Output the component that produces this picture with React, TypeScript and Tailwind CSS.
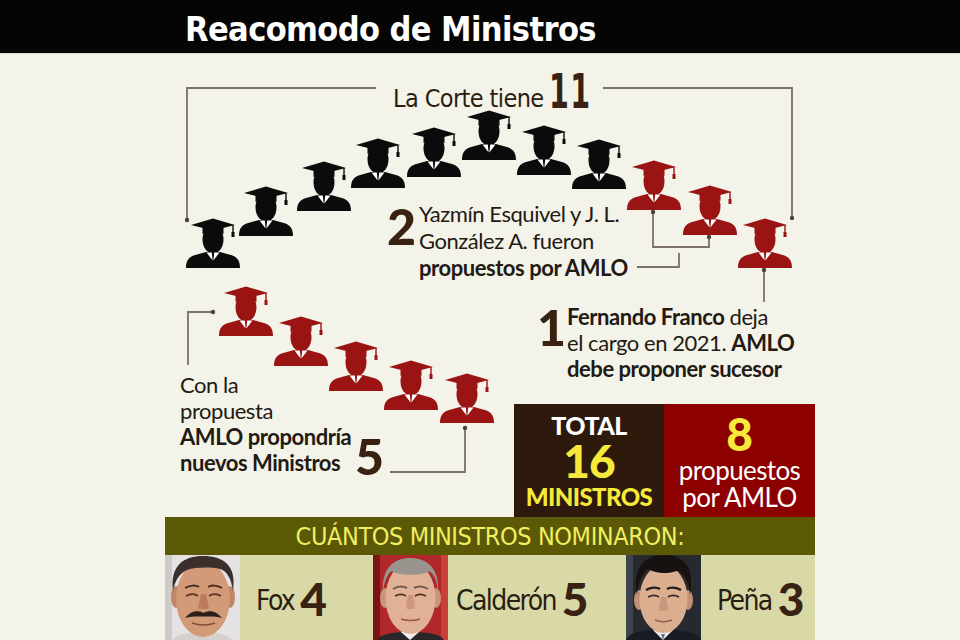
import React from "react";

type Node = { x: number; y: number; red?: boolean };

// coordinates are measured on the page; the canvas starts under the 54px header
const TOP = 54;

const nodes: Node[] = [
  { x: 185, y: 215 },
  { x: 238, y: 183 },
  { x: 296, y: 158 },
  { x: 350, y: 135 },
  { x: 406, y: 124 },
  { x: 461, y: 107 },
  { x: 516, y: 122 },
  { x: 571, y: 136 },
  { x: 626, y: 157, red: true },
  { x: 682, y: 182, red: true },
  { x: 737, y: 215, red: true },
  { x: 218, y: 283, red: true },
  { x: 273, y: 313, red: true },
  { x: 328, y: 338, red: true },
  { x: 383, y: 357, red: true },
  { x: 439, y: 370, red: true },
];

function Graduate({ color }: { color: string }) {
  return (
    <svg viewBox="0 0 56 53" width="56" height="53">
      <path
        fill={color}
        d="M1 53 C1 45 4 41.5 12 39.5 L21 37 L35 37 L44 39.5 C52 41.5 55 45 55 53 Z"
      />
      <ellipse cx="28" cy="24.5" rx="10.5" ry="14" fill={color} />
      <path fill={color} d="M17.5 10 H38.5 V19 C34 17 22 17 17.5 19 Z" />
      <path fill={color} d="M6 10 L28 3.5 L50 10 L28 15.5 Z" />
      <path stroke={color} strokeWidth="1.4" fill="none" d="M48 10 V18" />
      <rect x="46.5" y="17" width="3" height="5" fill={color} />
      <path fill="#fff" d="M21.5 37.5 L26.8 37.5 L27.6 45.5 Z M34.5 37.5 L29.2 37.5 L28.4 45.5 Z" />
    </svg>
  );
}

function Connectors() {
  const dots = [
    [187, 220],
    [792, 218],
    [653, 212],
    [709, 237],
    [764, 270],
    [213, 312],
    [465, 428],
  ];
  return (
    <svg
      className="absolute left-0 top-0"
      width="960"
      height="463"
      viewBox={`0 ${TOP} 960 463`}
      fill="none"
      stroke="#7a7264"
      strokeWidth="1.8"
    >
      <path d="M376 88 H187 V220" />
      <path d="M603 88 H792 V218" />
      <path d="M637 267 H679 V253" />
      <path d="M653 212 V247 H709 V237" />
      <path d="M764 270 V302" />
      <path d="M213 312 H188 V365" />
      <path d="M390 472 H465 V428" />
      {dots.map(([cx, cy]) => (
        <circle key={`${cx}-${cy}`} cx={cx} cy={cy} r="2.2" fill="#4a4238" stroke="none" />
      ))}
    </svg>
  );
}

function FoxPhoto() {
  return (
    <svg viewBox="0 0 75 85" width="75" height="85" className="block">
      <rect width="75" height="85" fill="#e4e2e2" />
      <rect x="0" y="0" width="7" height="85" fill="#cfcbc9" />
      <path d="M8 85 C10 80 22 77 37 77 C52 77 64 80 68 85 Z" fill="#d6d0cc" />
      <ellipse cx="11" cy="42" rx="5" ry="11" fill="#c08466" />
      <ellipse cx="65" cy="42" rx="5" ry="11" fill="#c08466" />
      <ellipse cx="38" cy="44" rx="27" ry="38" fill="#d29a76" />
      <path d="M8 36 C5 10 19 1 38 1 C58 1 72 10 68 36 C66 23 62 16 55 14 C46 12 31 12 22 15 C15 18 10 25 8 36 Z" fill="#3a2f2a" />
      <path d="M20 33 C25 30 31 30 34 32 M43 32 C46 30 52 30 57 33" stroke="#4a2c1e" strokeWidth="2" fill="none" />
      <path d="M21 41 C25 38.5 30 38.5 33 41 M44 41 C47 38.5 52 38.5 56 41" stroke="#5a3424" strokeWidth="1.8" fill="none" />
      <path d="M36 39 C35 47 32 51 34 54 L43 54 C45 51 42 47 41 39 Z" fill="#bb7c5e" />
      <path d="M20 63 C26 55 35 55 38.5 58 C42 55 51 55 57 63 C51 61 44 61.5 38.5 61.5 C33 61.5 26 61 20 63 Z" fill="#2b201a" />
      <path d="M27 68 C34 70.5 43 70.5 50 68" stroke="#8a4a3a" strokeWidth="1.5" fill="none" />
    </svg>
  );
}

function CalderonPhoto() {
  return (
    <svg viewBox="0 0 75 85" width="75" height="85" className="block">
      <rect width="75" height="85" fill="#b0282a" />
      <rect x="0" y="0" width="7" height="85" fill="#7a1414" />
      <rect x="68" y="0" width="7" height="85" fill="#c84038" />
      <path d="M4 85 C6 80 16 77 37 77 C58 77 69 80 71 85 Z" fill="#2a2628" />
      <path d="M28 77 L37 85 L46 77 Z" fill="#f2f0ee" />
      <ellipse cx="12" cy="43" rx="5" ry="10" fill="#c99478" />
      <ellipse cx="63" cy="43" rx="5" ry="10" fill="#c99478" />
      <ellipse cx="37.5" cy="43" rx="25" ry="36" fill="#e0b194" />
      <path d="M10 38 C8 13 21 3 37 3 C54 3 67 13 65 38 C64 25 61 19 56 16 C52 21 24 21 19 16 C14 19 11 27 10 38 Z" fill="#9a948f" />
      <path d="M20 34 C25 31 30 31 34 33 M41 33 C45 31 50 31 55 34" stroke="#6d5a50" strokeWidth="2" fill="none" />
      <path d="M22 41 C26 39 30 39 33 41 M42 41 C45 39 49 39 53 41" stroke="#4a3028" strokeWidth="1.8" fill="none" />
      <path d="M35 40 C34 47 32 51 34 54 L41 54 C43 51 41 47 40 40 Z" fill="#cd977d" />
      <path d="M28 64 C33 66 42 66 47 64" stroke="#9a5a4c" strokeWidth="1.5" fill="none" />
    </svg>
  );
}

function PenaPhoto() {
  return (
    <svg viewBox="0 0 75 85" width="75" height="85" className="block">
      <rect width="75" height="85" fill="#262a30" />
      <rect x="0" y="0" width="7" height="85" fill="#3e424a" />
      <path d="M0 85 C3 78 14 75 37 75 C60 75 72 78 75 85 Z" fill="#1a1c24" />
      <path d="M27 75 L37 85 L47 75 Z" fill="#f0f0f0" />
      <path d="M35 79 L37 85 L39 79 Z" fill="#6a6e78" />
      <ellipse cx="13" cy="45" rx="5" ry="10" fill="#c39274" />
      <ellipse cx="62" cy="45" rx="5" ry="10" fill="#c39274" />
      <ellipse cx="37.5" cy="44" rx="24" ry="34" fill="#dcae90" />
      <path d="M11 40 C6 12 19 0 38 0 C58 0 69 12 64 40 C63 26 58 18 51 16 C42 19 30 19 22 14 C16 18 12 28 11 40 Z" fill="#17120f" />
      <path d="M20 35 C25 32 31 32 34 34 M41 34 C44 32 50 32 55 35" stroke="#2a1c16" strokeWidth="2.4" fill="none" />
      <path d="M22 42 C26 40 30 40 33 42 M42 42 C45 40 49 40 53 42" stroke="#3a2620" strokeWidth="1.8" fill="none" />
      <path d="M35 42 C34 49 32 53 34 56 L41 56 C43 53 41 49 40 42 Z" fill="#c8967c" />
      <path d="M29 65 C34 67 41 67 46 65" stroke="#9a5a4c" strokeWidth="1.5" fill="none" />
    </svg>
  );
}

function Nominee({
  photo,
  name,
  count,
  width,
  pad,
}: {
  photo: React.ReactNode;
  name: string;
  count: string;
  width: string;
  pad: string;
}) {
  return (
    <div className={`flex h-full ${width}`}>
      <div className="shrink-0">{photo}</div>
      <div className={`flex flex-1 items-center bg-[#d9d9a8] pt-[6px] ${pad}`}>
        <span className="font-['DejaVu_Sans_Condensed',sans-serif] text-[28px] leading-none tracking-[-1.6px] text-[#2a1d12]">
          {name}
        </span>
        <span className="ml-[6px] mb-[3px] font-['Lato',sans-serif] text-[46px] font-black leading-none text-[#3a2213]">
          {count}
        </span>
      </div>
    </div>
  );
}

export default function App() {
  const body = "font-['Lato','Open_Sans',sans-serif] text-[22px] tracking-[-0.45px] text-[#221a13]";
  const bigNum = "font-['Lato',sans-serif] font-black leading-none text-[#3a2213]";

  return (
    <div className="h-[640px] w-[960px] overflow-hidden bg-[#f3f3e9]">
      <header className="h-[54px] border-b border-[#dcdcd0] bg-[#050505] pl-[185px]">
        <h1 className="pt-[3px] font-['DejaVu_Sans_Condensed',sans-serif] text-[34px] font-bold leading-[52px] tracking-[-0.6px] text-white">
          Reacomodo de Ministros
        </h1>
      </header>

      <section className="relative flex h-[463px] flex-col justify-end">
        <Connectors />

        {nodes.map((n, i) => (
          <div key={i} className="absolute" style={{ left: n.x, top: n.y - TOP }}>
            <Graduate color={n.red ? "#9b1414" : "#0b0b0b"} />
          </div>
        ))}

        <div className="absolute left-[393px] top-[13px] flex items-end">
          <span className="mb-[4px] font-['DejaVu_Sans_Condensed',sans-serif] text-[25px] leading-none tracking-[-0.6px] text-[#2a1d12]">
            La Corte tiene
          </span>
          <span className="ml-[5px] inline-block w-[40px] origin-left scale-x-[0.66] font-['DejaVu_Sans_Condensed',sans-serif] text-[48px] font-bold leading-none tracking-[2px] text-[#3a2213]">
            11
          </span>
        </div>

        <div className="absolute left-[387px] top-[146px] flex">
          <span className={`${bigNum} mt-[1px] text-[50px]`}>2</span>
          <p className={`${body} ml-[3px] leading-[27px]`}>
            Yazmín Esquivel y J. L.
            <br />
            González A. fueron
            <br />
            <b className="font-bold">propuestos por AMLO</b>
          </p>
        </div>

        <div className="absolute left-[537px] top-[250px] flex">
          <span className={`${bigNum} -mt-[2px] text-[50px]`}>1</span>
          <p className={`${body} ml-[1px] leading-[26px]`}>
            <b className="font-bold">Fernando Franco</b> deja
            <br />
            el cargo en 2021. <b className="font-bold">AMLO</b>
            <br />
            <b className="font-bold">debe proponer sucesor</b>
          </p>
        </div>

        <p className={`${body} absolute left-[180px] top-[318px] leading-[26px]`}>
          Con la
          <br />
          propuesta
          <br />
          <b className="font-bold">AMLO propondría</b>
          <br />
          <b className="font-bold">nuevos Ministros</b>
        </p>
        <span className={`${bigNum} absolute left-[355px] top-[377px] text-[50px]`}>5</span>

        <div className="ml-[514px] flex h-[113px] w-[301px] font-['Lato',sans-serif]">
          <div className="flex w-[150px] flex-col items-center justify-center bg-[#2d1a0d]">
            <span className="text-[25px] font-black leading-[25px] tracking-[-0.5px] text-white">TOTAL</span>
            <span className="text-[46px] font-black leading-[46px] tracking-[-1px] text-[#f6e93a]">16</span>
            <span className="text-[24px] font-black leading-[25px] tracking-[-0.6px] text-[#f6e93a]">MINISTROS</span>
          </div>
          <div className="flex flex-1 flex-col items-center justify-center bg-[#8c0000]">
            <span className="text-[46px] font-black leading-[46px] text-[#f6e93a]">8</span>
            <span className="text-[26px] leading-[27px] tracking-[-0.6px] text-white">propuestos</span>
            <span className="text-[26px] leading-[27px] tracking-[-0.6px] text-white">por AMLO</span>
          </div>
        </div>
      </section>

      <section className="ml-[165px] w-[650px]">
        <div className="flex h-[38px] items-center justify-center bg-[#5b5906]">
          <span className="font-['DejaVu_Sans_Condensed',sans-serif] text-[25px] leading-none tracking-[-0.4px] text-[#f1ee62]">
            CUÁNTOS MINISTROS NOMINARON:
          </span>
        </div>
        <div className="flex h-[85px]">
          <Nominee photo={<FoxPhoto />} name="Fox" count="4" width="w-[208px]" pad="pl-[16px]" />
          <Nominee photo={<CalderonPhoto />} name="Calderón" count="5" width="w-[253px]" pad="pl-[8px]" />
          <Nominee photo={<PenaPhoto />} name="Peña" count="3" width="w-[189px]" pad="pl-[16px]" />
        </div>
      </section>
    </div>
  );
}
